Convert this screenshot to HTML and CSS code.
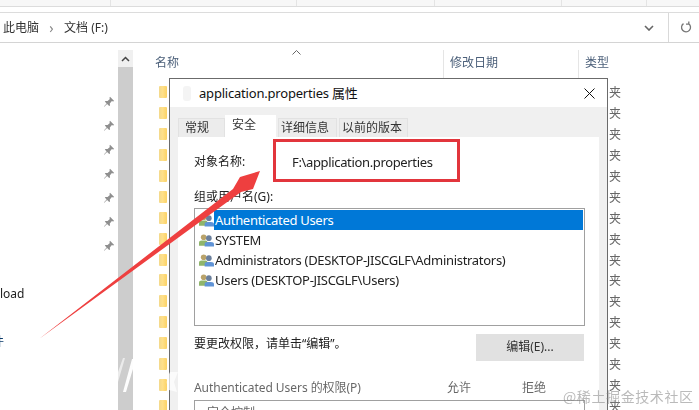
FILE: index.html
```html
<!DOCTYPE html>
<html lang="zh-CN">
<head>
<meta charset="utf-8">
<title>application.properties 属性</title>
<link rel="stylesheet" href="styles.css">
</head>
<body>
<svg class="defs" width="0" height="0" aria-hidden="true">
  <symbol id="pin" viewBox="0 0 12 12">
    <path d="M7 .8 11.2 5 10 5.600 8.900 5 6.800 7.400 7 9.400 6.200 10 4.100 7.900 1.200 10.800.9 10.500 3.600 7.400 1.800 5.600 2.500 4.900 4.600 5 6.900 3 6.400 1.900Z" fill="#8f8f8f"/>
  </symbol>
  <symbol id="users" viewBox="0 0 16 15">
    <circle cx="5" cy="4" r="3" fill="#b9a36b"/>
    <path d="M0 13V10Q0 7.500 3 7.500H7Q9 7.500 9 10V13Z" fill="#8fb56b"/>
    <circle cx="10.500" cy="5" r="3" fill="#6a7f9c"/>
    <path d="M6 14V11.500Q6 9 9 9H12.500Q16 9 16 11.500V14Z" fill="#5f93d6"/>
  </symbol>
</svg>

<div class="toolbar">
  <span class="tb-cell tb-a"></span><span class="tb-cell tb-b"></span><span class="tb-cell tb-c"></span><span class="tb-cell tb-d"></span><span class="tb-cell tb-e"></span>
</div>
<div class="address">
  <div class="crumbs">
    <span>此电脑</span><span class="sep">›</span><span>文档 (F:)</span>
  </div>
  <svg class="chev" width="10" height="6" viewBox="0 0 10 6"><path d="M1 1l4 4 4-4" fill="none" stroke="#666" stroke-width="1.600"/></svg>
  <div class="refresh">
    <svg width="12" height="13" viewBox="0 0 12 13"><path d="M8.500 2.600A4.500 4.500 0 1 1 3.300 2.700M3.200 0.600V3.200H6" fill="none" stroke="#777" stroke-width="1.300" transform="matrix(-1 0 0 1 12 0)"/></svg>
  </div>
</div>

<div class="main">
  <nav class="nav">
    <div class="pins">
      <svg class="pin"><use href="#pin"/></svg>
      <svg class="pin"><use href="#pin"/></svg>
      <svg class="pin"><use href="#pin"/></svg>
      <svg class="pin"><use href="#pin"/></svg>
      <svg class="pin"><use href="#pin"/></svg>
      <svg class="pin"><use href="#pin"/></svg>
      <svg class="pin"><use href="#pin"/></svg>
    </div>
    <div class="nav-text nav-load">load</div>
    <div class="nav-text nav-file">件</div>
  </nav>
  <div class="scroll">
    <div class="scroll-up">
      <svg width="9" height="6" viewBox="0 0 9 6"><path d="M1 5l3.500-3.500L8 5" fill="none" stroke="#444" stroke-width="1.500"/></svg>
    </div>
    <div class="scroll-thumb"></div>
  </div>
  <div class="files">
    <div class="head">
      <div class="col col-name">名称<svg class="caret" width="9" height="5" viewBox="0 0 9 5"><path d="M.5 4.500l4-4 4 4" fill="none" stroke="#666"/></svg></div>
      <div class="col col-date">修改日期</div>
      <div class="col col-type">类型</div>
    </div>
    <div class="rows">
      <div class="row"><i class="folder"></i><span class="kind">夹</span></div>
      <div class="row"><i class="folder"></i><span class="kind">夹</span></div>
      <div class="row"><i class="folder"></i><span class="kind">夹</span></div>
      <div class="row"><i class="folder"></i><span class="kind">夹</span></div>
      <div class="row"><i class="folder"></i><span class="kind">夹</span></div>
      <div class="row"><i class="folder"></i><span class="kind">夹</span></div>
      <div class="row"><i class="folder"></i><span class="kind">夹</span></div>
      <div class="row"><i class="folder"></i><span class="kind">夹</span></div>
      <div class="row"><i class="folder"></i><span class="kind">夹</span></div>
      <div class="row"><i class="folder"></i><span class="kind">夹</span></div>
      <div class="row"><i class="folder"></i><span class="kind">夹</span></div>
      <div class="row"><i class="folder"></i><span class="kind">夹</span></div>
      <div class="row"><i class="folder"></i><span class="kind">夹</span></div>
      <div class="row"><i class="folder"></i><span class="kind">夹</span></div>
      <div class="row"><i class="folder"></i><span class="kind">夹</span></div>
      <div class="row"><i class="folder"></i><span class="kind">夹</span></div>
    </div>
  </div>
</div>

<section class="dialog">
  <header class="titlebar">
    <i class="file-icon"></i>
    <span class="title">application.properties 属性</span>
    <svg class="close" width="11" height="11" viewBox="0 0 11 11"><path d="M.5.500l10 10M10.500.500l-10 10" stroke="#111" stroke-width="1"/></svg>
  </header>
  <div class="body">
    <div class="tabs">
      <span class="tab tab-1">常规</span>
      <span class="tab tab-on">安全</span>
      <span class="tab tab-3">详细信息</span>
      <span class="tab tab-4">以前的版本</span>
    </div>
    <div class="panel">
      <div class="object">
        <span class="object-label">对象名称:</span>
        <span class="object-value">F:\application.properties</span>
      </div>
      <div class="group-label">组或用户名(G):</div>
      <ul class="userlist">
        <li class="user"><svg class="uicon"><use href="#users"/></svg><span class="uname uname-on">Authenticated Users</span></li>
        <li class="user"><svg class="uicon"><use href="#users"/></svg><span class="uname">SYSTEM</span></li>
        <li class="user"><svg class="uicon"><use href="#users"/></svg><span class="uname">Administrators (DESKTOP-JISCGLF\Administrators)</span></li>
        <li class="user"><svg class="uicon"><use href="#users"/></svg><span class="uname">Users (DESKTOP-JISCGLF\Users)</span></li>
      </ul>
      <div class="edit-row">
        <span class="edit-hint">要更改权限，请单击“编辑”。</span>
        <span class="edit-btn">编辑(E)...</span>
      </div>
      <div class="perm-head">
        <span class="perm-title">Authenticated Users 的权限(P)</span>
        <span class="perm-allow">允许</span>
        <span class="perm-deny">拒绝</span>
      </div>
      <div class="perm-box">完全控制</div>
    </div>
    <div class="highlight"></div>
  </div>
</section>

<svg class="annot" width="699" height="410" viewBox="0 0 699 410" aria-hidden="true">
  <path d="M39 339 233 189 240 177 260 171 253 189 241 192Z" fill="#ee3f3f"/>
  <path d="M132 359 123 392 126 392 136 359Z" fill="#fff" opacity=".95"/>
  <path d="M118 372 123 358 125 358 118 382Z" fill="#fff" opacity=".6"/>
  <path d="M170 372q-6 10-1 18l8 2-3-10 4-10Z" fill="#fff" opacity=".7"/>
</svg>
<div class="watermark">@稀土掘金技术社区</div>
</body>
</html>
```

FILE: styles.css
```css
* { box-sizing: border-box; }
html, body { margin: 0; padding: 0; }
body {
  width: 699px;
  height: 410px;
  overflow: hidden;
  position: relative;
  background: #fff;
  color: #222;
  font: 12px/16px "Noto Sans", "Noto Sans CJK SC", sans-serif;
  filter: blur(.35px);
}
.defs { position: absolute; }

.toolbar {
  height: 7px;
  display: flex;
  background: #f7f7f7;
  border-bottom: 1px solid #dcdcdc;
}
.tb-cell { border-right: 1px solid #e4e4e4; }
.tb-a { width: 111px; }
.tb-b { width: 186px; }
.tb-c { width: 138px; }
.tb-d { width: 127px; }
.tb-e { width: 85px; }

.address {
  height: 31px;
  margin-top: 5px;
  display: flex;
  align-items: center;
  border-top: 1px solid #dcdcdc;
  border-bottom: 1px solid #d4d4d4;
}
.crumbs {
  flex: 1;
  display: flex;
  align-items: center;
  padding-left: 3px;
  font-size: 12px;
  color: #333;
}
.sep { width: 25px; text-align: center; color: #888; font-size: 14px; }
.chev { margin-right: 14px; }
.refresh {
  width: 31px;
  align-self: stretch;
  display: flex;
  align-items: center;
  padding-left: 11px;
  border-left: 1px solid #d9d9d9;
}

.main { display: flex; height: 367px; overflow: hidden; }
.nav { width: 118px; position: relative; flex: none; }
.pins {
  display: flex;
  flex-direction: column;
  align-items: flex-end;
  gap: 12px;
  padding: 53px 3px 0 0;
  height: 243px;
}
.pin { width: 12px; height: 12px; display: block; }
.nav-text { font-size: 12px; color: #222; overflow: hidden; white-space: nowrap; }
.nav-file { margin-top: 32px; margin-left: -8px; color: #0a3a6a; }

.scroll { width: 15px; flex: none; margin-top: 7px; display: flex; flex-direction: column; }
.scroll-up {
  height: 17px;
  background: #f0f0f0;
  display: flex;
  align-items: center;
  justify-content: center;
}
.scroll-thumb { flex: 1; background: #cdcdcd; }

.files { flex: 1; padding-left: 22px; min-width: 0; }
.head { display: flex; height: 39px; padding-top: 7px; color: #4c607a; font-size: 12px; }
.col { height: 32px; padding-top: 5px; }
.col-name { width: 288px; position: relative; }
.caret { position: absolute; left: 137px; top: 0; }
.col-date { width: 135px; border-left: 1px solid #e5e5e5; padding-left: 6px; }
.col-type { flex: 1; border-left: 1px solid #e5e5e5; padding-left: 6px; }
.row {
  height: 20.900px;
  display: flex;
  align-items: center;
  padding-left: 4px;
}
.folder {
  width: 8px;
  height: 12px;
  background: linear-gradient(90deg, #f3d98c, #ffe08a 45%, #fbd266);
  border-radius: 1px;
}
.kind { margin-left: 442px; font-size: 12px; line-height: 18px; padding-top: 2px; color: #666; }

.dialog {
  position: absolute;
  left: 169px;
  top: 78px;
  width: 439px;
  height: 332px;
  overflow: hidden;
  background: #f0f0f0;
  border: 1px solid #6b6b6b;
  border-bottom: 0;
}
.titlebar {
  height: 28px;
  background: #fff;
  display: flex;
  align-items: center;
  padding-left: 13px;
}
.file-icon {
  width: 8px;
  height: 15px;
  background: #f4f4f4;
  border-radius: 3px;
}
.title {
  flex: 1;
  margin-left: 8px;
  font-size: 13px;
  letter-spacing: -.2px;
  color: #111;
}
.close { margin-right: 12px; }
.body { position: relative; padding: 9px 8px 0; }
.tabs { display: flex; height: 21px; align-items: flex-end; font-size: 12px; color: #333; }
.tab {
  height: 19px;
  background: #ececec;
  line-height: 18px;
  padding-left: 6px;
  border: 1px solid #e2e2e2;
  border-bottom: 0;
}
.tab-1 { width: 47px; }
.tab-on { width: 51px; height: 22px; background: #fff; border: 0; line-height: 19px; padding-left: 7px; }
.tab-3 { width: 59px; margin-left: 2px; padding-left: 2px; }
.tab-4 { width: 69px; margin-left: 2px; padding-left: 2px; }
.panel {
  background: #fff;
  height: 300px;
  padding: 16px 15px 0 16px;
  font-size: 12px;
  color: #222;
}
.object { display: flex; height: 18px; align-items: center; }
.object-label { width: 98px; }
.object-value { font-size: 13px; letter-spacing: -.35px; color: #222; }
.group-label { margin-top: 18px; height: 16px; }
.userlist {
  list-style: none;
  margin: 3px 0 0;
  padding: 1px;
  width: 391px;
  height: 118px;
  border: 1px solid #a0a0a0;
}
.user { height: 20px; display: flex; align-items: center; padding-left: 3px; font-size: 13px; letter-spacing: -.3px; }
.uicon { width: 15px; height: 15px; flex: none; }
.uname { padding-left: 1px; color: #222; white-space: nowrap; }
.uname-on { flex: 1; background: #0078d7; color: #fff; height: 20px; line-height: 20px; }
.edit-row { display: flex; justify-content: space-between; width: 390px; margin-top: 8px; height: 27px; }
.edit-hint { padding-top: 2px; }
.edit-btn {
  width: 108px;
  height: 27px;
  background: #e1e1e1;
  text-align: center;
  line-height: 26px;
  color: #333;
}
.perm-head { display: flex; margin-top: 19px; height: 16px; color: #333; font-size: 12px; opacity: .75; }
.perm-title { width: 253px; white-space: nowrap; letter-spacing: -.05px; }
.perm-allow { width: 75px; }
.perm-deny { width: 40px; }
.perm-box {
  width: 391px;
  height: 40px;
  margin-top: 4px;
  border: 1px solid #a0a0a0;
  padding: 4px 0 0 12px;
  color: #666;
}
.highlight {
  position: absolute;
  left: 103px;
  top: 32px;
  width: 187px;
  height: 43px;
  border: 3px solid #e2353c;
}
.annot { position: absolute; left: 0; top: 0; pointer-events: none; }
.watermark {
  position: absolute;
  left: 563px;
  top: 387px;
  font-family: "Noto Sans CJK SC", sans-serif;
  font-size: 14px;
  line-height: 18px;
  letter-spacing: .6px;
  color: rgba(130,130,130,.55);
  white-space: nowrap;
}
```
